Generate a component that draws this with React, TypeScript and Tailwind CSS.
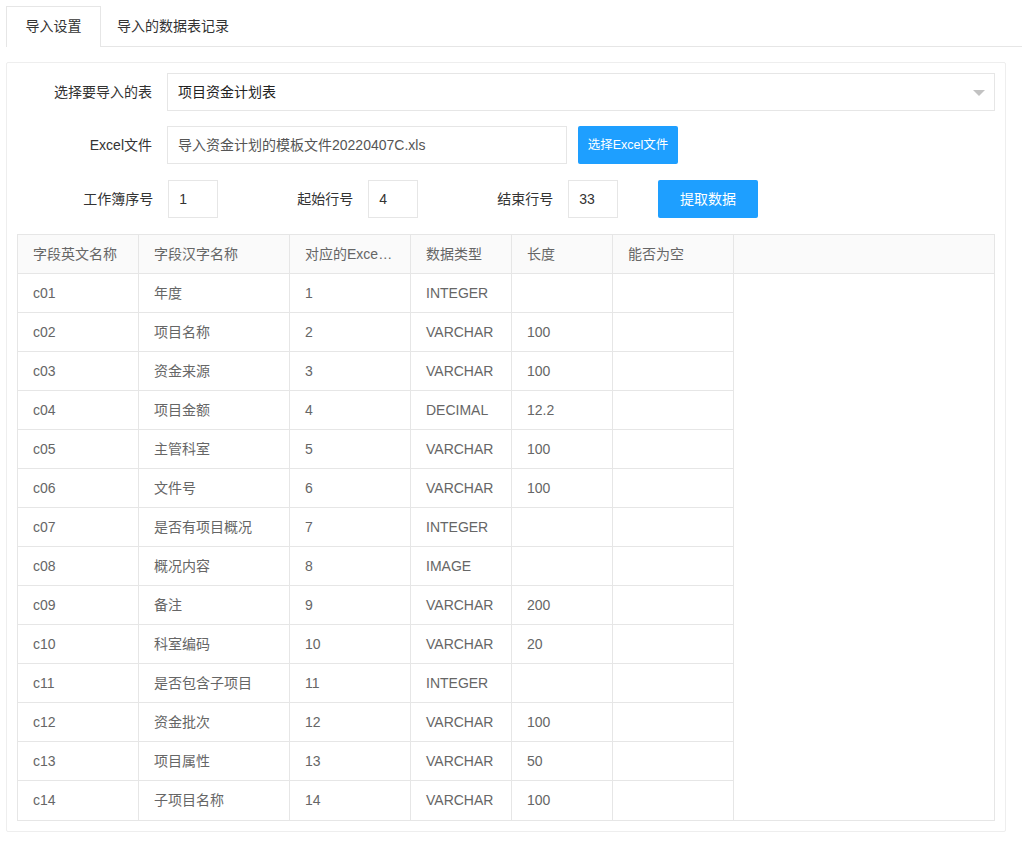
import React from "react";

type Row = {
  en: string;
  cn: string;
  col: string;
  type: string;
  len: string;
};

const ROWS: Row[] = [
  { en: "c01", cn: "年度", col: "1", type: "INTEGER", len: "" },
  { en: "c02", cn: "项目名称", col: "2", type: "VARCHAR", len: "100" },
  { en: "c03", cn: "资金来源", col: "3", type: "VARCHAR", len: "100" },
  { en: "c04", cn: "项目金额", col: "4", type: "DECIMAL", len: "12.2" },
  { en: "c05", cn: "主管科室", col: "5", type: "VARCHAR", len: "100" },
  { en: "c06", cn: "文件号", col: "6", type: "VARCHAR", len: "100" },
  { en: "c07", cn: "是否有项目概况", col: "7", type: "INTEGER", len: "" },
  { en: "c08", cn: "概况内容", col: "8", type: "IMAGE", len: "" },
  { en: "c09", cn: "备注", col: "9", type: "VARCHAR", len: "200" },
  { en: "c10", cn: "科室编码", col: "10", type: "VARCHAR", len: "20" },
  { en: "c11", cn: "是否包含子项目", col: "11", type: "INTEGER", len: "" },
  { en: "c12", cn: "资金批次", col: "12", type: "VARCHAR", len: "100" },
  { en: "c13", cn: "项目属性", col: "13", type: "VARCHAR", len: "50" },
  { en: "c14", cn: "子项目名称", col: "14", type: "VARCHAR", len: "100" },
];

const COLS = [
  { title: "字段英文名称", w: "w-[121px]" },
  { title: "字段汉字名称", w: "w-[151px]" },
  { title: "对应的Excel列号", w: "w-[121px]" },
  { title: "数据类型", w: "w-[101px]" },
  { title: "长度", w: "w-[101px]" },
  { title: "能否为空", w: "w-[121px]" },
];

function Field({ label, value }: { label: string; value: string }) {
  return (
    <div className="flex w-[200px] items-center">
      <label className="w-[151px] pr-[15px] text-right text-[#333]">{label}</label>
      <div className="flex h-[38px] w-[50px] items-center border border-[#e6e6e6] pl-[10px] text-[#333]">
        {value}
      </div>
    </div>
  );
}

export default function App() {
  return (
    <div
      className="min-h-[844px] bg-white pl-[6px] pt-[6px] text-[14px]"
      style={{ fontFamily: '"Liberation Sans", Arial, "Noto Sans CJK SC", sans-serif' }}
    >
      {/* tabs */}
      <div className="flex h-[41px] border-b border-[#e6e6e6]">
        <div className="-mb-px h-[41px] w-[95px] border border-b-0 border-[#e6e6e6] bg-white text-center leading-[39px] text-[#333]">
          导入设置
        </div>
        <div className="px-[16px] leading-[40px] text-[#333]">导入的数据表记录</div>
      </div>

      {/* panel */}
      <div className="mr-[16px] mt-[15px] rounded-[2px] border border-[#eee] px-[10px] pb-[10px] pt-[10px]">
        <div className="mb-[15px] flex items-center">
          <label className="w-[150px] pr-[15px] text-right text-[#333]">选择要导入的表</label>
          <div className="relative flex h-[38px] flex-1 items-center border border-[#e6e6e6] pl-[10px] text-[#222]">
            项目资金计划表
            <span className="absolute right-[9px] top-[16px] h-0 w-0 border-x-[6px] border-t-[6px] border-x-transparent border-t-[#c2c2c2]" />
          </div>
        </div>

        <div className="mb-[16px] flex items-center">
          <label className="w-[150px] pr-[15px] text-right text-[#333]">Excel文件</label>
          <div className="flex h-[38px] w-[400px] items-center border border-[#e6e6e6] pl-[10px] text-[#555]">
            导入资金计划的模板文件20220407C.xls
          </div>
          <button className="ml-[11px] h-[38px] w-[100px] rounded-[2px] bg-[#1e9fff] text-[12.5px] text-white">
            选择Excel文件
          </button>
        </div>

        <div className="mb-[16px] ml-px flex items-center">
          <Field label="工作簿序号" value="1" />
          <Field label="起始行号" value="4" />
          <Field label="结束行号" value="33" />
          <button className="ml-[40px] h-[38px] w-[100px] rounded-[2px] bg-[#1e9fff] text-[14px] text-white">
            提取数据
          </button>
        </div>

        {/* table */}
        <div className="border border-[#e6e6e6] text-[#666]">
          <div className="flex h-[39px] border-b border-[#e6e6e6] bg-[#fafafa]">
            {COLS.map((c) => (
              <div
                key={c.title}
                className={`${c.w} flex shrink-0 items-center border-r border-[#e6e6e6] px-[15px]`}
              >
                <span className="truncate">{c.title}</span>
              </div>
            ))}
            <div className="flex-1" />
          </div>
          {ROWS.map((r, i) => {
            const last = i === ROWS.length - 1;
            const cells = [r.en, r.cn, r.col, r.type, r.len, ""];
            return (
              <div key={r.en} className="flex h-[39px]">
                {cells.map((v, j) => (
                  <div
                    key={j}
                    className={`${COLS[j].w} flex shrink-0 items-center border-r border-[#e6e6e6] px-[15px] ${
                      last ? "" : "border-b"
                    }`}
                  >
                    {v}
                  </div>
                ))}
                <div className="flex-1" />
              </div>
            );
          })}
        </div>
      </div>
    </div>
  );
}
